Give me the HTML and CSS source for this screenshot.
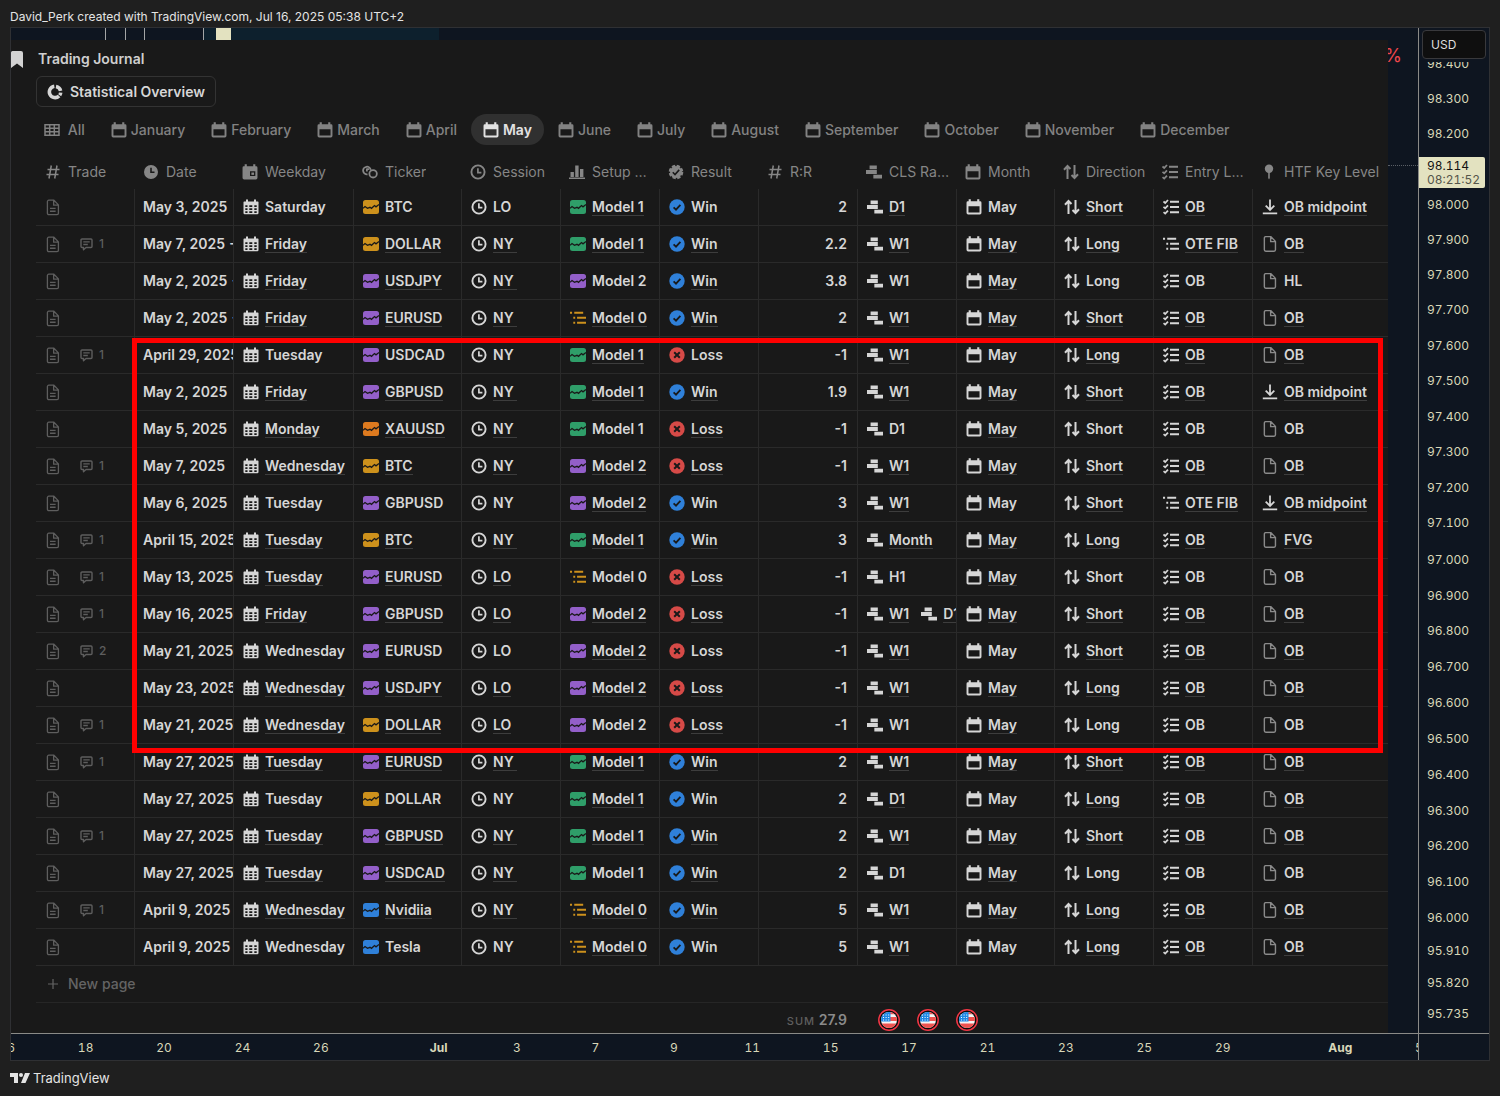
FILE: index.html
```html
<!DOCTYPE html>
<html lang="en">
<head>
<meta charset="utf-8">
<title>Trading Journal</title>
<link rel="stylesheet" href="styles.css">
</head>
<body>
<svg class="sprite" aria-hidden="true">
  <symbol id="bookmark" viewBox="0 0 12 17"><path fill="currentColor" d="M1.500 0h8.500a2 2 0 0 1 2 2v15l-6-4.500L0 17V1.500A1.500 1.500 0 0 1 1.500 0z"/></symbol>
  <symbol id="donut" viewBox="0 0 16 16"><path fill="none" stroke="currentColor" stroke-width="3.600" d="M7.300 2.300a5.700 5.700 0 1 0 4.800 9.700M9 2.400a5.700 5.700 0 0 1 4.600 4.400M13.700 8.600a5.700 5.700 0 0 1-1 2.600"/></symbol>
  <symbol id="grid" viewBox="0 0 16 14"><path fill="none" stroke="currentColor" stroke-width="1.500" d="M1 1.700h14v10.600H1zM1 5.200h14M1 8.800h14M5.700 2v10M10.300 2v10"/></symbol>
  <symbol id="calendar" viewBox="0.500 0.300 15 15"><path fill="currentColor" fill-rule="evenodd" d="M3 .5h2v2h6v-2h2v2h.8A1.200 1.200 0 0 1 15 3.700v9.600a1.500 1.500 0 0 1-1.500 1.500h-11A1.500 1.500 0 0 1 1 13.300V3.700a1.200 1.200 0 0 1 1.200-1.200H3zM2.800 7v5.900h10.400V7z"/></symbol>
  <symbol id="calendar-day" viewBox="0.500 0.300 15 15"><path fill="currentColor" fill-rule="evenodd" d="M3 .5h2v2h6v-2h2v2h.8A1.200 1.200 0 0 1 15 3.700v9.600a1.500 1.500 0 0 1-1.500 1.500h-11A1.500 1.500 0 0 1 1 13.300V3.700a1.200 1.200 0 0 1 1.200-1.200H3zM8 7.200v4.300h5V7.200z"/><path fill="currentColor" d="M9.300 8.300h2.500v2.200H9.300z"/></symbol>
  <symbol id="calendar-grid" viewBox="0 0 16 16"><path fill="currentColor" fill-rule="evenodd" d="M3 .5h2v2h6v-2h2v2h1.800a.7.7 0 0 1 .7.7v10.900a1.200 1.200 0 0 1-1.200 1.200H1.700A1.200 1.200 0 0 1 .5 14.100V3.200a.7.7 0 0 1 .7-.7H3zM2.300 6.200v1.900h2.200V6.200zm4 0v1.900h3V6.200zm5 0v1.900h2.400V6.200zm-9 3.100v1.800h2.200V9.300zm4 0v1.800h3V9.300zm5 0v1.800h2.400V9.300zm-9 3v1.600h2.200v-1.600zm4 0v1.600h3v-1.600zm5 0v1.600h2.400v-1.600z"/></symbol>
  <symbol id="hash" viewBox="0 0 16 16"><path fill="none" stroke="currentColor" stroke-width="1.500" d="M6.300 1.500 4 14.500M12 1.500 9.700 14.500M2.500 5.500h12M1.500 10.500h12"/></symbol>
  <symbol id="clock-fill" viewBox="0 0 16 16"><path fill="currentColor" fill-rule="evenodd" d="M8 1a7 7 0 1 1 0 14A7 7 0 0 1 8 1zM7.200 3.800v5.100h4.300V7.400H8.800V3.800z"/></symbol>
  <symbol id="clock" viewBox="0 0 16 16"><circle cx="8" cy="8" r="6.600" fill="none" stroke="currentColor" stroke-width="1.900"/><path fill="none" stroke="currentColor" stroke-width="1.700" d="M7.900 4.200v4.500h3.500"/></symbol>
  <symbol id="coins" viewBox="0 0 18 16"><g fill="none" stroke="currentColor" stroke-width="2"><path d="M9.800 5.600a4.300 4.300 0 1 0-3.600 5"/><circle cx="12.500" cy="10" r="4.200"/><path d="M8 4.800H5.500M5.500 4v3.500"/></g></symbol>
  <symbol id="bars" viewBox="0 0 16 16"><path fill="currentColor" d="M1.500 8h3.400v5H1.500zM6.200 1.500h3.400V13H6.200zM11 5h3.400v8H11zM0 13.400h16V15H0z"/></symbol>
  <symbol id="badge" viewBox="0 0 16 16"><circle cx="8" cy="8" r="6" fill="currentColor"/><circle cx="8" cy="8" r="6" fill="none" stroke="currentColor" stroke-width="2.600" stroke-dasharray="3.200 1.510"/><path fill="none" stroke="#191919" stroke-width="1.600" d="m4.800 8.300 2.200 2.200 4.200-4.600"/></symbol>
  <symbol id="steps" viewBox="0 0 17 16"><path fill="currentColor" d="M3.800 1h7.700v4.200H3.800zM0 6h11.500v4.200H0zM7.800 10.900H17V15H7.800z"/></symbol>
  <symbol id="updown" viewBox="0 0 16 16"><path fill="none" stroke="currentColor" stroke-width="2" d="M4.500 15V3M1 5.700 4.500 2 7.500 5M11.500 1v12M8.500 11l3 3L15 10.300"/></symbol>
  <symbol id="checks" viewBox="0 0 16 16"><path fill="none" stroke="currentColor" stroke-width="2.100" d="M7 2.700h9M7 8h9M7 13.300h9"/><path fill="none" stroke="currentColor" stroke-width="1.800" d="m.5 2.500 1.700 1.500L5 1M.5 7.800l1.700 1.500L5 6.300M.5 13.100l1.700 1.500L5 11.600"/></symbol>
  <symbol id="outline" viewBox="0 0 17 16"><path fill="none" stroke="currentColor" stroke-width="2.100" d="M0 2.500h2.200M4.500 2.500H14M3.500 7.700h2M7.500 7.700H17M3.500 13h2M7.500 13H17"/></symbol>
  <symbol id="pin" viewBox="0 0 16 16"><circle cx="8" cy="4.700" r="4.200" fill="currentColor"/><path fill="currentColor" d="M7.200 8h1.600v6L8 15.500 7.200 14z"/></symbol>
  <symbol id="download" viewBox="0 0 16 16"><path fill="none" stroke="currentColor" stroke-width="1.800" d="M8 .5v10M3.700 6.700 8 11l4.300-4.300M.8 14.300h14.400"/></symbol>
  <symbol id="page" viewBox="0 0.500 15 17"><path fill="none" stroke="currentColor" stroke-width="1.500" stroke-linejoin="round" d="M3 1.200h5.500l4.800 5v9a1.500 1.500 0 0 1-1.500 1.500H3a1.500 1.500 0 0 1-1.500-1.500V2.700A1.500 1.500 0 0 1 3 1.200zM8.200 1.500v5h5"/></symbol>
  <symbol id="page-text" viewBox="0 0.500 15 17"><path fill="none" stroke="currentColor" stroke-width="1.400" stroke-linejoin="round" d="M3 1.200h5.500l4.800 5v9a1.500 1.500 0 0 1-1.500 1.500H3a1.500 1.500 0 0 1-1.500-1.500V2.700A1.500 1.500 0 0 1 3 1.200zM8.200 1.500v5h5M4.300 10h6M4.300 13h6"/></symbol>
  <symbol id="comment" viewBox="0 0 13 13"><path fill="none" stroke="currentColor" stroke-width="1.400" stroke-linejoin="round" d="M2 1h9a1 1 0 0 1 1 1v6.500a1 1 0 0 1-1 1H6L3.500 11.700V9.500H2a1 1 0 0 1-1-1V2a1 1 0 0 1 1-1zM3.300 3.900h6.400M3.300 6.500h4.500"/></symbol>
  <symbol id="chart" viewBox="0 0 16 16"><path fill="currentColor" d="M2.500 1h11A2.500 2.500 0 0 1 16 3.500v9a2.500 2.500 0 0 1-2.500 2.500h-11A2.500 2.500 0 0 1 0 12.500v-9A2.500 2.500 0 0 1 2.500 1z"/><path fill="none" stroke="#191919" stroke-width="1.300" d="m0 9.300 2-1.800 2.500 1.800 2.500-1 1.500 1L11.500 6.500l1.500 1.300L16 5.500"/></symbol>
  <symbol id="win" viewBox="0 0 16 16"><circle cx="8" cy="8" r="7.700" fill="#2f80d9"/><path fill="none" stroke="#191919" stroke-width="1.800" d="m4.600 8.300 2.400 2.300 4.400-4.800"/></symbol>
  <symbol id="loss" viewBox="0 0 16 16"><circle cx="8" cy="8" r="7.700" fill="#d64a47"/><path fill="none" stroke="#191919" stroke-width="2" d="m5.200 5.200 5.600 5.600M10.800 5.200l-5.600 5.600"/></symbol>
  <symbol id="plus" viewBox="0 0 16 16"><path fill="none" stroke="currentColor" stroke-width="1.200" d="M8 3v10M3 8h10"/></symbol>
  <symbol id="flag" viewBox="0 0 22 22"><clipPath id="disc"><circle cx="11" cy="11" r="8"/></clipPath><circle cx="11" cy="11" r="10.200" fill="#0c0c0c" stroke="#f23645" stroke-width="1.500"/><g clip-path="url(#disc)"><path fill="#f4f4f4" d="M3 3h16v16H3z"/><path fill="#ef5350" d="M12 3h7v2.300h-7zM12 8h7v4h-7zM3 14.500h16V17H3z"/><path fill="#ef5350" d="M3 17h16v2H3z"/><path fill="#1e88e5" d="M3 3h9.500v9.500H3z"/><path stroke="#fff" stroke-dasharray="1 1.600" d="M5 6h7M5 8.500h7M5 11h7"/></g></symbol>
  <symbol id="tv" viewBox="0 0 20 10"><path fill="currentColor" d="M0 0h8v10H4V4H0zM15 0h5l-4.500 10H11z"/><circle cx="11" cy="2" r="2" fill="currentColor"/></symbol>
</svg>

<header class="credit">David_Perk created with TradingView.com, Jul 16, 2025 05:38 UTC+2</header>

<main class="chart">
  <section class="canvas">
    <svg class="candles" width="428" height="12" aria-hidden="true">
      <path fill="#0d202d" d="M193 0h235v12H193z"/>
      <path fill="#a3a5a6" d="M94 0h1v12h-1zM114 0h1v12h-1zM133 0h1v12h-1zM192 0h1v12h-1z"/>
      <path fill="#e3e2c0" d="M205 0h15v12h-15z"/>
    </svg>
    <span class="percent">%</span>
    <article class="journal">
      <h1 class="title"><svg class="mark"><use href="#bookmark"/></svg>Trading Journal</h1>
      <button class="overview" type="button"><svg class="icon"><use href="#donut"/></svg>Statistical Overview</button>
      <nav class="tabs" id="tabs"></nav>
      <div class="sheet">
        <table>
          <colgroup id="cols"></colgroup>
          <thead><tr id="heads"></tr></thead>
          <tbody id="rows"></tbody>
          <tfoot>
            <tr class="new"><td colspan="13"><button type="button"><svg class="icon"><use href="#plus"/></svg>New page</button></td></tr>
            <tr class="sum"><td colspan="8"><small>SUM</small> 27.9</td><td colspan="5"></td></tr>
          </tfoot>
        </table>
        <div class="highlight"></div>
      </div>
    </article>
    <div class="flags"><svg><use href="#flag"/></svg><svg><use href="#flag"/></svg><svg><use href="#flag"/></svg></div>
    <div class="price-line"></div>
  </section>
  <aside class="prices">
    <ul id="prices"></ul>
    <div class="currency"><button type="button">USD</button></div>
    <div class="last"><span>98.114</span><time>08:21:52</time></div>
  </aside>
  <div class="times"><ul id="times"></ul></div>
  <div class="corner"></div>
</main>

<footer class="brand"><svg><use href="#tv"/></svg>TradingView</footer>
<script src="script.js"></script>
</body>
</html>
```
FILE: styles.css
```css
* { box-sizing: border-box; }
body {
  margin: 0;
  min-height: 100vh;
  padding: 0 10px;
  background: #1f1f1f;
  color: #d6d6d6;
  font: 500 14px/20px Inter, "Liberation Sans", sans-serif;
}
button { border: 0; padding: 0; background: none; color: inherit; font: inherit; cursor: pointer; }
ul { list-style: none; margin: 0; padding: 0; }
svg { flex: none; }
.sprite { position: absolute; width: 0; height: 0; }
.icon { width: 16px; height: 16px; }

.credit { padding: 8px 0 1px; font-size: 12px; font-weight: 400; line-height: 18px; color: #e4e4e4; }

.chart {
  display: grid;
  grid-template: auto 27px / minmax(0, 1fr) 71px;
  border: 1px solid #2f3033;
  background: #0e1520;
}
.canvas { position: relative; padding-right: 30px; }
.candles { display: block; }
.percent { position: absolute; top: 16px; right: 16px; color: #f0474c; font-size: 18px; font-weight: 400; line-height: 24px; }

.journal { position: relative; background: #191919; padding-left: 25px; }
.title { display: flex; align-items: center; gap: 15px; height: 36px; margin: 0 0 0 -25px; padding-top: 2px; font-size: 14px; font-weight: 600; color: #cfcfcf; }
.mark { width: 12px; height: 17px; color: #d2d2d2; }
.overview { display: flex; align-items: center; gap: 7px; height: 31px; padding: 0 10px; border: 1px solid #333; border-radius: 6px; font-weight: 600; }
.tabs { display: flex; gap: 2px; margin: 7px 0 10px -4px; color: #828282; }
.tabs button { display: flex; align-items: center; gap: 4px; height: 31px; padding: 0 12px; border-radius: 16px; }
.tabs .active { background: #303030; color: #e2e2e2; font-weight: 600; }

.sheet { position: relative; }
table { width: 100%; table-layout: fixed; border-collapse: separate; border-spacing: 0; }
th, td { padding: 0; text-align: left; font-weight: inherit; }
th { height: 34px; color: #868686; font-weight: 400; }
tbody td { height: 37px; border-bottom: 1px solid #2a2a2a; font-weight: 600; }
tbody td + td { border-left: 1px solid #2a2a2a; }
.cell { display: flex; align-items: center; gap: 6px; padding-left: 9px; overflow: hidden; white-space: nowrap; }
th .cell { gap: 7px; padding: 0 4px 0 9px; }
th .cell span { overflow: hidden; text-overflow: ellipsis; }
.date { padding-left: 8px; gap: 0; }
.number { display: block; padding-right: 10px; text-align: right; }
.trade { padding-left: 10px; color: #5e5e5e; font-weight: 500; font-size: 12px; }
.trade .page { width: 14px; height: 17px; }
.trade .note { width: 13px; height: 13px; margin-left: 14px; }
.value { border-bottom: 1px solid transparent; line-height: 16px; white-space: pre; }
.line-all .value, .line-linked .linked, .line-tagged .tagged { border-bottom-color: #3d3d3d; }
.cell .value + .icon { margin-left: 6px; }
.faint { color: #8a8a8a; }
.gold { color: #cd911c; }
.violet { color: #935fc9; }
.green { color: #2f9e69; }
.orange { color: #dd7a1f; }
.blue { color: #2f80d9; }

.new td { height: 37px; border-bottom: 1px solid #262626; color: #646464; }
.new button { display: flex; align-items: center; gap: 7px; padding-left: 9px; }
.sum td { height: 30px; padding: 4px 10px 0 0; text-align: right; font-weight: 600; color: #8a8a8a; }
.sum small { font-size: 11px; font-weight: 500; letter-spacing: 1px; color: #5f5f5f; }
.highlight { position: absolute; top: 183px; left: 96px; right: 5px; height: 415px; border: 5px solid #f00; pointer-events: none; }

.flags { position: absolute; left: 867px; bottom: 2px; display: flex; gap: 17px; }
.flags svg { width: 22px; height: 22px; }
.price-line { position: absolute; top: 137px; right: 0; width: 30px; border-top: 1px dotted #5a5f66; }

.prices { position: relative; border-left: 1px solid #8a8a87; color: #d8d7b8; font-size: 12px; font-weight: 400; line-height: 16px; font-variant-numeric: tabular-nums; }
.prices ul { display: flex; flex-direction: column; height: 100%; padding-bottom: 11px; }
.prices li { display: flex; flex-basis: 0; align-items: flex-end; padding-left: 8px; }
.currency { position: absolute; top: 0; left: 3px; right: 3px; padding: 2px 0 3px; background: #0e1520; }
.currency button { display: block; width: 100%; height: 29px; padding-left: 8px; border: 1px solid #39393c; border-radius: 4px; background: #0f0f0f; color: #dedede; text-align: left; }
.last { position: absolute; top: 129px; left: 0; right: 4px; padding: 2px 0 1px 8px; border-radius: 0 2px 2px 0; background: #e3e2c0; color: #131313; line-height: 14px; }
.last span, .last time { display: block; }
.last time { color: #55554a; }

.times, .corner { border-top: 1px solid #8a8a87; }
.corner { border-left: 1px solid #8a8a87; }
.times { overflow: hidden; color: #d8d7b8; font-size: 12px; font-weight: 400; line-height: 28px; font-variant-numeric: tabular-nums; }
.times ul { display: flex; margin: 0 -40px 0 -43px; }
.times li { flex-basis: 0; text-align: center; }
.times .month { font-weight: 700; }

.brand { display: flex; align-items: center; gap: 3px; padding: 7px 0; font-size: 13px; font-weight: 400; color: #e4e4e4; }
.brand svg { width: 20px; height: 10px; }
```
FILE: script.js
```js
const icon = (name, tone = "") => `<svg class="icon ${tone}"><use href="#${name}"/></svg>`;
const put = (id, html) => { document.getElementById(id).innerHTML = html; };

const months = ["January", "February", "March", "April", "May", "June", "July",
  "August", "September", "October", "November", "December"];
put("tabs", `<button type="button">${icon("grid")}&nbsp;All</button>` + months.map(m =>
  `<button type="button"${m === "May" ? ' class="active"' : ""}>${icon("calendar")}${m}</button>`).join(""));

const columns = [
  [98, "hash", "Trade"], [99, "clock-fill", "Date"], [120, "calendar-day", "Weekday"],
  [108, "coins", "Ticker"], [99, "clock", "Session"], [99, "bars", "Setup Model"],
  [99, "badge", "Result"], [99, "hash", "R:R"], [99, "steps", "CLS Range"],
  [98, "calendar", "Month"], [99, "updown", "Direction"], [99, "checks", "Entry Logic"],
  [136, "pin", "HTF Key Level"],
];
put("cols", columns.map(c => `<col style="width:${c[0]}px">`).join(""));
put("heads", columns.map(c => `<th scope="col"><div class="cell">${icon(c[1])}<span>${c[2]}</span></div></th>`).join(""));

// comments | date | weekday | ticker | session | setup | result | R:R | range | direction | entry | key level
const trades = `
0|May 3, 2025|Saturday|BTC|LO|Model 1|Win|2|D1|Short|OB|OB midpoint
1|May 7, 2025 →|Friday|DOLLAR|NY|Model 1|Win|2.2|W1|Long|OTE FIB|OB
0|May 2, 2025 →|Friday|USDJPY|NY|Model 2|Win|3.8|W1|Long|OB|HL
0|May 2, 2025 →|Friday|EURUSD|NY|Model 0|Win|2|W1|Short|OB|OB
1|April 29, 2025|Tuesday|USDCAD|NY|Model 1|Loss|-1|W1|Long|OB|OB
0|May 2, 2025|Friday|GBPUSD|NY|Model 1|Win|1.9|W1|Short|OB|OB midpoint
0|May 5, 2025|Monday|XAUUSD|NY|Model 1|Loss|-1|D1|Short|OB|OB
1|May 7, 2025|Wednesday|BTC|NY|Model 2|Loss|-1|W1|Short|OB|OB
0|May 6, 2025|Tuesday|GBPUSD|NY|Model 2|Win|3|W1|Short|OTE FIB|OB midpoint
1|April 15, 2025|Tuesday|BTC|NY|Model 1|Win|3|Month|Long|OB|FVG
1|May 13, 2025|Tuesday|EURUSD|LO|Model 0|Loss|-1|H1|Short|OB|OB
1|May 16, 2025|Friday|GBPUSD|LO|Model 2|Loss|-1|W1,D1|Short|OB|OB
2|May 21, 2025|Wednesday|EURUSD|LO|Model 2|Loss|-1|W1|Short|OB|OB
0|May 23, 2025|Wednesday|USDJPY|LO|Model 2|Loss|-1|W1|Long|OB|OB
1|May 21, 2025|Wednesday|DOLLAR|LO|Model 2|Loss|-1|W1|Long|OB|OB
1|May 27, 2025|Tuesday|EURUSD|NY|Model 1|Win|2|W1|Short|OB|OB
0|May 27, 2025|Tuesday|DOLLAR|NY|Model 1|Win|2|D1|Long|OB|OB
1|May 27, 2025|Tuesday|GBPUSD|NY|Model 1|Win|2|W1|Short|OB|OB
0|May 27, 2025|Tuesday|USDCAD|NY|Model 1|Win|2|D1|Long|OB|OB
1|April 9, 2025|Wednesday|Nvidiia|NY|Model 0|Win|5|W1|Long|OB|OB
0|April 9, 2025|Wednesday|Tesla|NY|Model 0|Win|5|W1|Long|OB|OB`.trim().split("\n");

const tickerTone = { BTC: "gold", DOLLAR: "gold", XAUUSD: "orange", Nvidiia: "blue", Tesla: "blue" };
const setups = { "Model 0": ["outline", "gold"], "Model 1": ["chart", "green"], "Model 2": ["chart", "violet"] };
const levels = { "OB midpoint": ["download", ""] };
const lineStyles = ["line-tagged", "line-all", "line-linked", "line-all"];

const td = html => `<td><div class="cell">${html}</div></td>`;
const linked = (i, text, tone) => icon(i, tone) + `<span class="value linked">${text}</span>`;
const tagged = (i, text, tone) => icon(i, tone) + `<span class="value tagged">${text}</span>`;

put("rows", trades.map((line, n) => {
  const [notes, date, day, ticker, session, setup, result, rr, range, side, entry, level] = line.split("|");
  const note = +notes ? `<svg class="note"><use href="#comment"/></svg>${notes}` : "";
  const [levelIcon, levelTone] = levels[level] || ["page", "faint"];
  return `<tr class="${lineStyles[n % 4]}">
    <td><div class="cell trade"><svg class="page"><use href="#page-text"/></svg>${note}</div></td>
    <td><div class="cell date">${date}</div></td>` +
    td(linked("calendar-grid", day)) +
    td(linked("chart", ticker, tickerTone[ticker] || "violet")) +
    td(linked("clock", session === "NY" ? "NY " : session)) +
    td(tagged(setups[setup][0], setup, setups[setup][1])) +
    td(linked(result.toLowerCase(), result)) +
    `<td><div class="cell number">${rr}</div></td>` +
    td(range.split(",").map(r => tagged("steps", r)).join("")) +
    td(linked("calendar", "May")) +
    td(tagged("updown", side)) +
    td(tagged(entry === "OB" ? "checks" : "outline", entry)) +
    td(tagged(levelIcon, level, levelTone)) + "</tr>";
}).join(""));

// Each axis label carries its distance from the previous one.
const prices = [["98.400", 44], ["98.300", 35], ["98.200", 35], ["98.000", 71], ["97.900", 35], ["97.800", 35],
  ["97.700", 35], ["97.600", 36], ["97.500", 35], ["97.400", 36], ["97.300", 35], ["97.200", 36],
  ["97.100", 35], ["97.000", 36], ["96.900", 36], ["96.800", 35], ["96.700", 36], ["96.600", 36],
  ["96.500", 36], ["96.400", 36], ["96.300", 36], ["96.200", 35], ["96.100", 36], ["96.000", 36],
  ["95.910", 33], ["95.820", 32], ["95.735", 31]];
put("prices", prices.map(([p, gap]) => `<li style="flex-grow:${gap}">${p}</li>`).join(""));

const times = ["16", "18", "20", "24", "26", "", "Jul", "3", "7", "9", "11", "15", "17", "21", "23", "25", "29", "", "Aug", "5"];
put("times", times.map(t =>
  `<li style="flex-grow:${t ? 2 : 1}"${/^[A-Z]/.test(t) ? ' class="month"' : ""}>${t}</li>`).join(""));
```
